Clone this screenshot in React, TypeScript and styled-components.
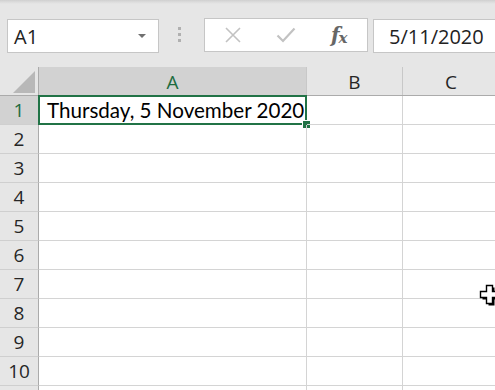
import styled, { createGlobalStyle } from "styled-components";

const GlobalStyle = createGlobalStyle`
  html, body {
    margin: 0;
    padding: 0;
    background: #ffffff;
    overflow: hidden;
  }
  body {
    font-family: "Open Sans", "Noto Sans", sans-serif;
  }
`;

const COLS = [
  { name: "A", width: 268 },
  { name: "B", width: 96 },
  { name: "C", width: 97 },
  { name: "D", width: 97 },
];

const ROWS = [1, 2, 3, 4, 5, 6, 7, 8, 9, 10, 11];

function XIcon() {
  return (
    <svg width="18" height="16" viewBox="0 0 18 16">
      <path d="M2 1 L16 15 M16 1 L2 15" stroke="#c2c2c2" strokeWidth="1.6" fill="none" />
    </svg>
  );
}

function CheckIcon() {
  return (
    <svg width="20" height="16" viewBox="0 0 20 16">
      <path d="M1.5 8.5 L7 14 L18.5 1.5" stroke="#c2c2c2" strokeWidth="2.2" fill="none" />
    </svg>
  );
}

function CursorIcon() {
  return (
    <svg width="22" height="22" viewBox="0 0 22 22">
      <path d="M8 2 H14 V8 H20 V14 H14 V20 H8 V14 H2 V8 H8 Z" fill="#000" transform="translate(1.5 1.5)" />
      <path d="M7 1 H13 V7 H19 V13 H13 V19 H7 V13 H1 V7 H7 Z" fill="#fff" stroke="#000" strokeWidth="1.4" transform="translate(0.5 0.5)" />
    </svg>
  );
}

function App() {
  return (
    <Page>
      <GlobalStyle />
      <Toolbar>
        <NameBox>
          <span>A1</span>
          <Caret />
        </NameBox>
        <Grip>
          <i />
          <i />
          <i />
        </Grip>
        <FormulaButtons>
          <IconSlot>
            <XIcon />
          </IconSlot>
          <IconSlot>
            <CheckIcon />
          </IconSlot>
          <Fx>
            f<sub>x</sub>
          </Fx>
        </FormulaButtons>
        <FormulaInput>5/11/2020</FormulaInput>
      </Toolbar>

      <Sheet>
        <HeaderRow>
          <Corner>
            <svg width="22" height="22" viewBox="0 0 22 22">
              <path d="M22 0 V22 H0 Z" fill="#b8b8b8" />
            </svg>
          </Corner>
          {COLS.map((c) => (
            <ColHeader key={c.name} $width={c.width} $active={c.name === "A"}>
              {c.name === "D" ? "" : c.name}
            </ColHeader>
          ))}
        </HeaderRow>
        {ROWS.map((r) => (
          <Row key={r}>
            <RowHeader $active={r === 1}>{r <= 10 ? r : ""}</RowHeader>
            {COLS.map((c) => (
              <Cell key={c.name} $width={c.width}>
                {r === 1 && c.name === "A" && (
                  <>
                    <CellText>Thursday, 5 November 2020</CellText>
                    <Selection>
                      <FillHandle />
                    </Selection>
                  </>
                )}
              </Cell>
            ))}
          </Row>
        ))}
      </Sheet>
      <Pointer>
        <CursorIcon />
      </Pointer>
    </Page>
  );
}

export default App;

const Page = styled.div`
  position: relative;
  width: 495px;
  height: 390px;
  overflow: hidden;
  background: #ffffff;
`;

const Toolbar = styled.div`
  display: flex;
  align-items: flex-start;
  height: 67px;
  box-sizing: border-box;
  padding: 19px 0 0 7px;
  background: linear-gradient(#cfcfcf 0, #dcdcdc 2px, #e6e6e6 4px, #e6e6e6 100%);
`;

const NameBox = styled.div`
  position: relative;
  display: flex;
  align-items: center;
  justify-content: space-between;
  box-sizing: border-box;
  flex: 0 0 152px;
  height: 34px;
  padding: 0 12px 0 6px;
  background: #ffffff;
  border: 1px solid #c6c6c6;
  font-size: 20px;
  color: #222;
`;

const Caret = styled.div`
  width: 0;
  height: 0;
  border-left: 4px solid transparent;
  border-right: 4px solid transparent;
  border-top: 4px solid #707070;
`;

const Grip = styled.div`
  display: flex;
  flex-direction: column;
  gap: 3px;
  flex: 0 0 4px;
  margin: 8px 22px 0 19px;
  i {
    display: block;
    width: 3px;
    height: 3px;
    background: #b0b0b0;
  }
`;

const FormulaButtons = styled.div`
  display: flex;
  align-items: center;
  box-sizing: border-box;
  flex: 0 0 164px;
  height: 34px;
  margin-top: -1px;
  padding-left: 18px;
  background: #ffffff;
  border: 1px solid #c6c6c6;
`;

const IconSlot = styled.div`
  display: flex;
  align-items: center;
  justify-content: center;
  width: 20px;
  margin-right: 33px;
`;

const Fx = styled.div`
  font-family: "DejaVu Serif", "Liberation Serif", serif;
  font-style: italic;
  font-weight: 600;
  font-size: 20px;
  color: #666666;
  margin-left: 2px;
  letter-spacing: -1px;
  sub {
    font-size: 15px;
    vertical-align: -1px;
  }
`;

const FormulaInput = styled.div`
  flex: 1;
  box-sizing: border-box;
  height: 34px;
  margin-left: 5px;
  padding: 0 0 0 15px;
  display: flex;
  align-items: center;
  background: #ffffff;
  border: 1px solid #c6c6c6;
  border-right: none;
  font-size: 20px;
  color: #222;
`;

const Sheet = styled.div`
  display: flex;
  flex-direction: column;
`;

const HeaderRow = styled.div`
  display: flex;
  height: 29px;
  box-sizing: border-box;
  background: #e6e6e6;
  border-bottom: 1px solid #ababab;
`;

const Corner = styled.div`
  display: flex;
  align-items: flex-end;
  justify-content: flex-end;
  box-sizing: border-box;
  flex: 0 0 39px;
  padding: 0 3px 2px 0;
  border-right: 1px solid #ababab;
`;

const ColHeader = styled.div<{ $width: number; $active?: boolean }>`
  flex: 0 0 ${(p) => p.$width}px;
  box-sizing: border-box;
  display: flex;
  align-items: center;
  justify-content: center;
  border-right: 1px solid #c8c8c8;
  background: ${(p) => (p.$active ? "#d2d2d2" : "#e6e6e6")};
  color: ${(p) => (p.$active ? "#1d6b40" : "#262626")};
  font-size: 19px;
  padding-top: 2px;
`;

const Row = styled.div`
  display: flex;
  height: 29px;
`;

const RowHeader = styled.div<{ $active?: boolean }>`
  flex: 0 0 39px;
  box-sizing: border-box;
  display: flex;
  align-items: center;
  justify-content: center;
  background: ${(p) => (p.$active ? "#d2d2d2" : "#e6e6e6")};
  color: ${(p) => (p.$active ? "#1d6b40" : "#262626")};
  border-right: 1px solid #ababab;
  border-bottom: 1px solid #cfcfcf;
  font-size: 19px;
`;

const Cell = styled.div<{ $width: number }>`
  position: relative;
  flex: 0 0 ${(p) => p.$width}px;
  box-sizing: border-box;
  display: flex;
  align-items: center;
  border-right: 1px solid #d4d4d4;
  border-bottom: 1px solid #d4d4d4;
`;

const CellText = styled.span`
  font-family: "Lato", "Open Sans", sans-serif;
  font-size: 20.6px;
  color: #000;
  padding-left: 8px;
  white-space: nowrap;
`;

const Selection = styled.div`
  position: absolute;
  left: -1px;
  top: -1px;
  right: -1px;
  bottom: -1px;
  border: 2px solid #217346;
  pointer-events: none;
`;

const FillHandle = styled.div`
  position: absolute;
  right: -6px;
  bottom: -6px;
  width: 7px;
  height: 7px;
  background: #217346;
  border: 1px solid #ffffff;
`;

const Pointer = styled.div`
  position: absolute;
  left: 479px;
  top: 284px;
`;
